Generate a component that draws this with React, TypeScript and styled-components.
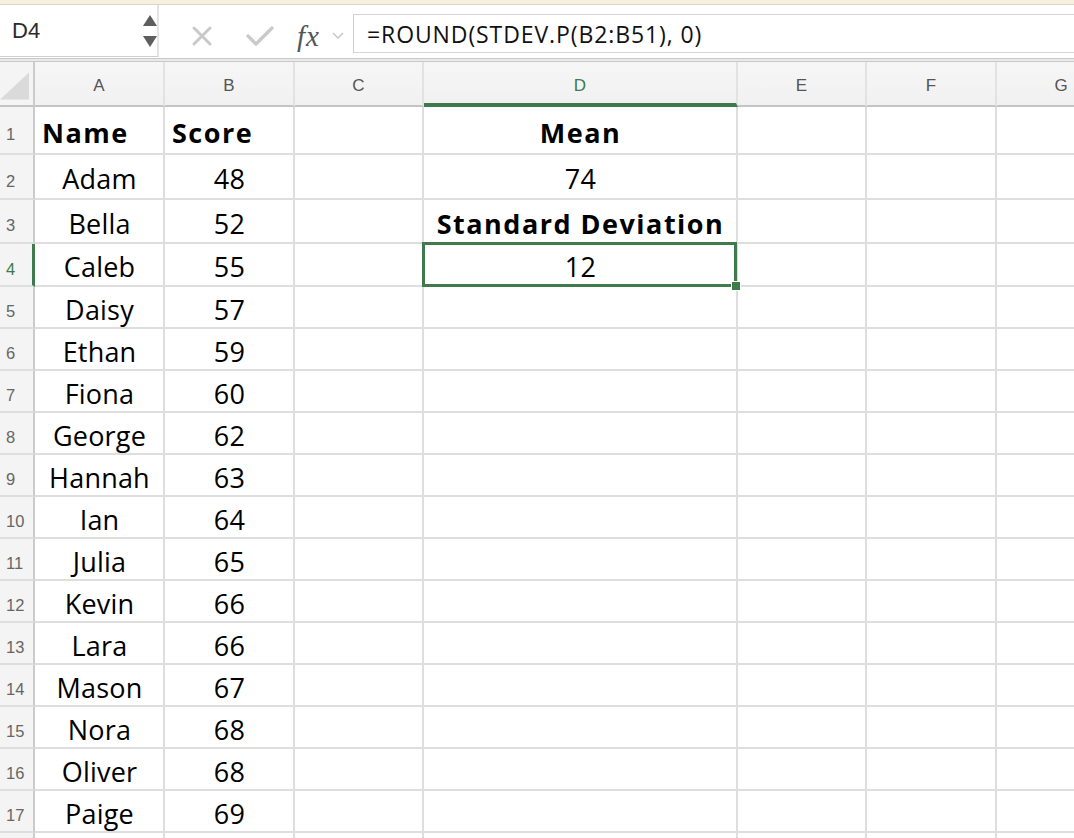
import React from "react";
import styled, { createGlobalStyle, css } from "styled-components";

const GlobalStyle = createGlobalStyle`
  html, body {
    margin: 0;
    padding: 0;
    background: #ffffff;
    overflow: hidden;
  }
`;

const CELL_FONT = `"Open Sans", "Lato", sans-serif`;
const UI_FONT = `"Liberation Sans", "DejaVu Sans", sans-serif`;
const GREEN = "#3e7a4b";
const GRID = "#dedede";

const Page = styled.div`
  width: 1074px;
  height: 838px;
  overflow: hidden;
`;

const TopStrip = styled.div`
  height: 4px;
  background: #f7efe0;
  border-bottom: 1px solid #ded5c4;
`;

const Toolbar = styled.div`
  height: 53px;
  display: flex;
  align-items: flex-start;
  background: #ffffff;
`;

const NameBox = styled.div`
  width: 159px;
  height: 52px;
  flex-shrink: 0;
  border-right: 2px solid #e4e4e4;
  border-bottom: 1px solid #cfcfcf;
  display: flex;
  align-items: center;
  justify-content: space-between;
  padding: 0 0 0 12px;
  box-sizing: border-box;
  font-family: ${UI_FONT};
  font-size: 22px;
  color: #2b2b2b;
`;

const Spinner = styled.div`
  display: flex;
  flex-direction: column;
  gap: 10px;
`;

const Tools = styled.div`
  display: flex;
  align-items: center;
  padding-left: 30px;
  height: 70px;
  margin-top: -4px;
  align-self: stretch;
  flex-shrink: 0;
`;

const ToolButton = styled.span<{ $width: number; $offset?: number }>`
  width: ${(p) => p.$width}px;
  margin-left: ${(p) => p.$offset || 0}px;
  display: flex;
  align-items: center;
  justify-content: center;
`;

const Fx = styled.span`
  display: inline-block;
  width: 26px;
  margin-left: 20px;
  font-family: "Liberation Serif", "DejaVu Serif", serif;
  font-style: italic;
  font-size: 29px;
  color: #555555;
  letter-spacing: 1px;
`;

const FormulaInput = styled.div`
  flex: 1;
  margin-top: 9px;
  height: 39px;
  box-sizing: border-box;
  border-top: 1px solid #d6d6d6;
  border-left: 1px solid #d0d0d0;
  border-bottom: 1px solid #d6d6d6;
  display: flex;
  align-items: center;
  padding-left: 13px;
  font-family: ${CELL_FONT};
  font-size: 23px;
  letter-spacing: 0.9px;
  color: #111111;
  white-space: nowrap;
`;

const Separator = styled.div`
  height: 2px;
  background: #e9e9e9;
  border-top: 1px solid #c9c9c9;
  border-bottom: 1px solid #c9c9c9;
`;

const Sheet = styled.div`
  display: grid;
  grid-template-columns: 35px 130px 130px 129px 314px 129px 130px 130px;
  grid-template-rows: 45px 48px 45px 44px 43px repeat(14, 42px);
`;

const Corner = styled.div`
  background: #f4f4f4;
  border-right: 2px solid #cbcbcb;
  border-bottom: 2px solid #c4c4c4;
  box-sizing: border-box;
  display: flex;
  align-items: flex-end;
  padding: 0 4px 5px 0;
`;

const ColHeader = styled.div<{ $active?: boolean }>`
  background: linear-gradient(#f6f6f6, #f1f1f1);
  border-right: 2px solid #e2e2e2;
  border-bottom: ${(p) => (p.$active ? `4px solid ${GREEN}` : "2px solid #c4c4c4")};
  box-sizing: border-box;
  display: flex;
  align-items: center;
  justify-content: center;
  padding-top: ${(p) => (p.$active ? "6px" : "4px")};
  font-family: ${UI_FONT};
  font-size: 17px;
  color: ${(p) => (p.$active ? GREEN : "#555555")};
`;

const RowHeader = styled.div<{ $active?: boolean }>`
  background: #f4f4f4;
  border-right: ${(p) => (p.$active ? `3px solid ${GREEN}` : "2px solid #cbcbcb")};
  border-bottom: 2px solid ${GRID};
  box-sizing: border-box;
  display: flex;
  align-items: center;
  padding: 9px 0 0 6px;
  font-family: ${UI_FONT};
  font-size: 16.5px;
  color: ${(p) => (p.$active ? GREEN : "#666666")};
`;

const Cell = styled.div<{
  $bold?: boolean;
  $align?: "left" | "center";
  $selected?: boolean;
}>`
  position: relative;
  border-right: 2px solid ${GRID};
  border-bottom: 2px solid ${GRID};
  box-sizing: border-box;
  display: flex;
  align-items: center;
  justify-content: ${(p) => (p.$align === "left" ? "flex-start" : "center")};
  padding: 4px 6px 0 7px;
  font-family: ${CELL_FONT};
  font-size: 27px;
  font-weight: ${(p) => (p.$bold ? 700 : 400)};
  letter-spacing: ${(p) => (p.$bold ? "1.5px" : "0.2px")};
  color: #000000;
  white-space: nowrap;
  ${(p) =>
    p.$selected &&
    css`
      z-index: 2;
      &::before {
        content: "";
        position: absolute;
        left: -2px;
        top: -2px;
        right: -1px;
        bottom: -2px;
        border: 3px solid ${GREEN};
        pointer-events: none;
      }
      &::after {
        content: "";
        position: absolute;
        right: -5px;
        bottom: -6px;
        width: 10px;
        height: 10px;
        background: ${GREEN};
        border: 1px solid #ffffff;
        box-sizing: border-box;
      }
    `}
`;

type CellData = { text?: string; bold?: boolean; align?: "left" | "center"; selected?: boolean };

const people: [string, string][] = [
  ["Adam", "48"],
  ["Bella", "52"],
  ["Caleb", "55"],
  ["Daisy", "57"],
  ["Ethan", "59"],
  ["Fiona", "60"],
  ["George", "62"],
  ["Hannah", "63"],
  ["Ian", "64"],
  ["Julia", "65"],
  ["Kevin", "66"],
  ["Lara", "66"],
  ["Mason", "67"],
  ["Nora", "68"],
  ["Oliver", "68"],
  ["Paige", "69"],
];

const columns = ["A", "B", "C", "D", "E", "F", "G"];

const dColumn: Record<number, CellData> = {
  1: { text: "Mean", bold: true },
  2: { text: "74" },
  3: { text: "Standard Deviation", bold: true },
  4: { text: "12", selected: true },
};

function buildRows(): CellData[][] {
  const rows: CellData[][] = [];
  rows.push([
    { text: "Name", bold: true, align: "left" },
    { text: "Score", bold: true, align: "left" },
    {},
    dColumn[1],
    {},
    {},
    {},
  ]);
  people.forEach(([name, score], i) => {
    const r = i + 2;
    rows.push([{ text: name }, { text: score }, {}, dColumn[r] || {}, {}, {}, {}]);
  });
  // row 18 starts at the bottom edge of the window; only its gridlines show
  rows.push([{}, {}, {}, {}, {}, {}, {}]);
  return rows;
}

const CrossIcon = () => (
  <svg width="22" height="22" viewBox="0 0 22 22">
    <path d="M3 3 L19 19 M19 3 L3 19" stroke="#c9c9c9" strokeWidth="3" strokeLinecap="round" />
  </svg>
);

const CheckIcon = () => (
  <svg width="30" height="22" viewBox="0 0 30 22">
    <path d="M3 11 L11 19 L27 3" stroke="#c9c9c9" strokeWidth="3.2" fill="none" strokeLinecap="round" strokeLinejoin="round" />
  </svg>
);

const ChevronIcon = () => (
  <svg width="12" height="8" viewBox="0 0 12 8">
    <path d="M1 1 L6 6 L11 1" stroke="#c4c4c4" strokeWidth="1.4" fill="none" />
  </svg>
);

const Triangle = ({ up }: { up?: boolean }) => (
  <svg width="14" height="11" viewBox="0 0 14 11">
    <path d={up ? "M7 0 L14 11 L0 11 Z" : "M0 0 L14 0 L7 11 Z"} fill="#5e5e5e" />
  </svg>
);

const CornerTriangle = () => (
  <svg width="30" height="28" viewBox="0 0 30 28">
    <path d="M30 0 L30 28 L0 28 Z" fill="#dadada" />
  </svg>
);

export default function App() {
  const rows = buildRows();
  return (
    <Page>
      <GlobalStyle />
      <TopStrip />
      <Toolbar>
        <NameBox>
          <span>D4</span>
          <Spinner>
            <Triangle up />
            <Triangle />
          </Spinner>
        </NameBox>
        <Tools>
          <ToolButton $width={26}>
            <CrossIcon />
          </ToolButton>
          <ToolButton $width={34} $offset={28}>
            <CheckIcon />
          </ToolButton>
          <Fx>fx</Fx>
          <ToolButton $width={30}>
            <ChevronIcon />
          </ToolButton>
        </Tools>
        <FormulaInput>=ROUND(STDEV.P(B2:B51), 0)</FormulaInput>
      </Toolbar>
      <Separator />
      <Sheet>
        <Corner>
          <CornerTriangle />
        </Corner>
        {columns.map((c) => (
          <ColHeader key={c} $active={c === "D"}>
            {c}
          </ColHeader>
        ))}
        {rows.map((row, i) => (
          <React.Fragment key={i}>
            <RowHeader $active={i + 1 === 4}>{i < 17 ? i + 1 : ""}</RowHeader>
            {row.map((cell, j) => (
              <Cell key={j} $bold={cell.bold} $align={cell.align} $selected={cell.selected}>
                {cell.text}
              </Cell>
            ))}
          </React.Fragment>
        ))}
      </Sheet>
    </Page>
  );
}
